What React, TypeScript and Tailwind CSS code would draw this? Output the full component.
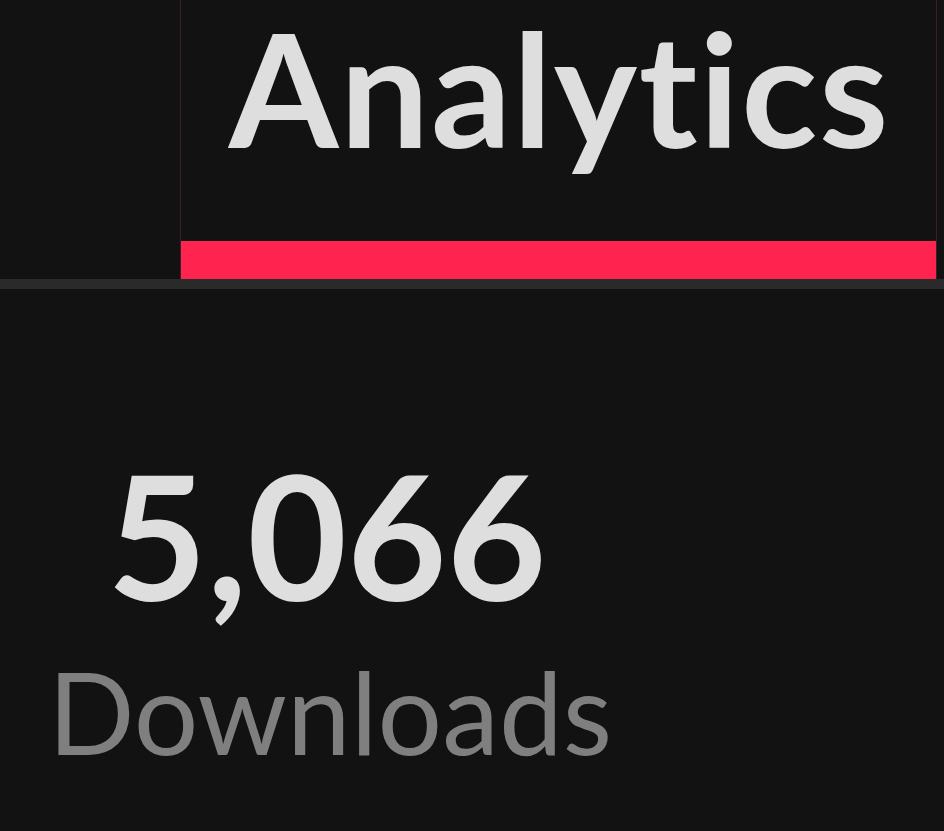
export default function App() {
  return (
    <div
      className="min-h-[831px] w-full bg-[#121212] text-[#dedede]"
      style={{ fontFamily: "Lato, 'Noto Sans', sans-serif" }}
    >
      {/* tab strip */}
      <div className="flex h-[279px]">
        <div className="w-[180px]" />
        <div className="flex w-[757px] flex-col border-x border-[#3a2026]">
          <div className="flex flex-1 justify-center pt-[8px] pl-[2px]">
            <span className="text-[158px] font-bold leading-none tracking-[1.7px] [font-variant-ligatures:none]">
              Analytics
            </span>
          </div>
          <div className="h-[38px] bg-[#ff2450]" />
        </div>
      </div>
      <div className="h-[10px] bg-[#2a2a2a]" />

      {/* stat */}
      <div className="flex w-[660px] flex-col items-center pt-[160px]">
        <span className="-ml-[6px] text-[172px] font-bold leading-none">5,066</span>
        <span className="mt-[33px] text-[114px] font-normal leading-none text-[#7f7f7f]">
          Downloads
        </span>
      </div>
    </div>
  );
}
